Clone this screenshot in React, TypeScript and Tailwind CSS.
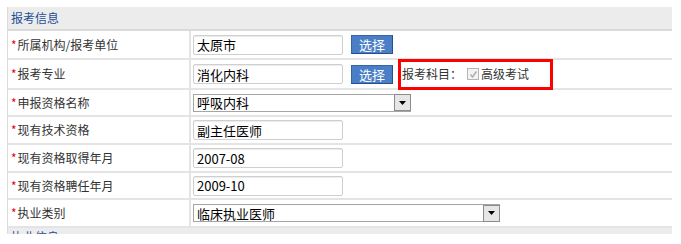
import React from 'react';

const font = { fontFamily: '"Noto Sans CJK SC", "Liberation Sans", sans-serif' };

const Label: React.FC<{ text: string }> = ({ text }) => (
    <div className="w-[183px] h-full flex items-center pl-[3px] border-r-2 border-[#e4e4e4] text-[12px] text-[#333]">
        <span className="text-[#e00] mr-[1px]">*</span>
        {text}
    </div>
);

const TextInput: React.FC<{ value: string }> = ({ value }) => (
    <div className="w-[150px] h-[20px] border border-[#cfcfcf] rounded-[2px] bg-white shadow-[inset_0_1px_1px_rgba(0,0,0,0.08)] flex items-center pl-[3px] text-[13px] text-black leading-none">
        {value}
    </div>
);

const PickButton: React.FC = () => (
    <div className="ml-[8px] w-[42px] h-[19px] bg-[#4a7fc8] border border-[#3565a8] border-r-[#2a4f86] border-b-[#2a4f86] flex items-center justify-center text-[13px] text-white leading-none">
        选择
    </div>
);

const Select: React.FC<{ value: string; width: string }> = ({ value, width }) => (
    <div className={`${width} h-[18px] border border-[#a5a5a5] bg-white flex items-center text-[13px] text-black leading-none`}>
        <span className="flex-1 pl-[3px]">{value}</span>
        <span className="w-[17px] h-[17px] -mr-px border border-[#8c8c8c] bg-[#e6e6e6] flex items-center justify-center">
            <svg width="7" height="4" viewBox="0 0 7 4">
                <path d="M0 0 H7 L3.5 4 Z" fill="#000" />
            </svg>
        </span>
    </div>
);

const Row: React.FC<{ h: string; label: string; children: React.ReactNode }> = ({ h, label, children }) => (
    <div className={`${h} flex border-b-2 border-[#e4e4e4]`}>
        <Label text={label} />
        <div className="flex-1 flex items-center pl-[2px]">{children}</div>
    </div>
);

const App: React.FC = () => {
    return (
        <div className="w-[681px] h-[244px] bg-white overflow-hidden" style={font}>
            <div className="mt-[7px] ml-[7px] w-[665px] border-l border-[#dcdcdc]">
                <div className="h-[24px] bg-[#ececec] border-b-2 border-[#dadada] flex items-center pl-[3px] text-[12px] text-[#1d4f96]">
                    报考信息
                </div>
                <Row h="h-[29px]" label="所属机构/报考单位">
                    <TextInput value="太原市" />
                    <PickButton />
                </Row>
                <Row h="h-[30px]" label="报考专业">
                    <TextInput value="消化内科" />
                    <PickButton />
                    <div className="ml-[5px] h-[31px] w-[155px] border-[3px] border-[#ff0000] flex items-center pl-[1px] text-[12px] text-[#333]">
                        报考科目：
                        <span className="ml-[5px] w-[12px] h-[12px] border border-[#b5b5b5] bg-[#f3f3f3] flex items-center justify-center">
                            <svg width="9" height="9" viewBox="0 0 9 9">
                                <path d="M1.5 4.5 L3.5 7 L7.5 1.5" stroke="#a8a8a8" strokeWidth="1.3" fill="none" />
                            </svg>
                        </span>
                        <span className="ml-[2px]">高级考试</span>
                    </div>
                </Row>
                <Row h="h-[27px]" label="申报资格名称">
                    <Select value="呼吸内科" width="w-[218px]" />
                </Row>
                <Row h="h-[28px]" label="现有技术资格">
                    <TextInput value="副主任医师" />
                </Row>
                <Row h="h-[28px]" label="现有资格取得年月">
                    <TextInput value="2007-08" />
                </Row>
                <Row h="h-[27px]" label="现有资格聘任年月">
                    <TextInput value="2009-10" />
                </Row>
                <Row h="h-[28px]" label="执业类别">
                    <Select value="临床执业医师" width="w-[307px]" />
                </Row>
                <div className="h-[6px] bg-[#ececec] overflow-hidden pl-[3px] pt-[2px] text-[12px] leading-[14px] text-[#1d4f96]">
                    执业信息
                </div>
            </div>
        </div>
    );
};

export default App;
